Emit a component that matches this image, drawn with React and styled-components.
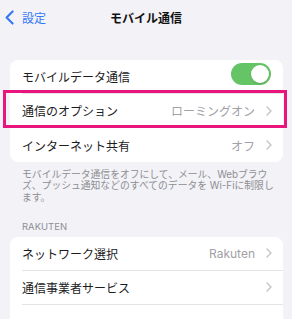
import React from 'react'
import styled, { createGlobalStyle } from 'styled-components'

const GlobalStyle = createGlobalStyle`
    html, body {
        margin: 0;
        padding: 0;
        background: #f2f2f7;
    }
    body {
        font-family: Inter, "Noto Sans CJK JP", "Noto Sans", sans-serif;
        -webkit-font-smoothing: antialiased;
    }
`

function Chevron() {
    return (
        <svg width="6" height="10" viewBox="0 0 6 10">
            <path d="M1 1l4 4-4 4" fill="none" stroke="#c4c4c7" strokeWidth="1.4" strokeLinecap="round" strokeLinejoin="round" />
        </svg>
    )
}

function Row({ label, value, chevron, toggle, last, highlight }) {
    return (
        <RowWrap>
            <RowInner last={last}>
                <Label>{label}</Label>
                {value && <Value>{value}</Value>}
                {chevron && <ChevronBox><Chevron /></ChevronBox>}
                {toggle && <Toggle><Knob /></Toggle>}
            </RowInner>
            {highlight && <Highlight />}
        </RowWrap>
    )
}

export default function App() {
    return (
        <Page>
            <GlobalStyle />
            <Header>
                <Back>
                    <svg width="9" height="15" viewBox="0 0 9 15">
                        <path d="M7.6 1.4L1.6 7.5l6 6.1" fill="none" stroke="#3478f6" strokeWidth="2.1" strokeLinecap="round" strokeLinejoin="round" />
                    </svg>
                    <BackText>設定</BackText>
                </Back>
                <Title>モバイル通信</Title>
                <span />
            </Header>

            <Card>
                <Row label="モバイルデータ通信" toggle />
                <Row label="通信のオプション" value="ローミングオン" chevron highlight />
                <Row label="インターネット共有" value="オフ" chevron last />
            </Card>

            <Footer>
                モバイルデータ通信をオフにして、メール、Webブラウ<br />
                ズ、プッシュ通知などのすべてのデータを Wi-Fiに制限し<br />
                ます。
            </Footer>

            <SectionTitle>RAKUTEN</SectionTitle>

            <Card>
                <Row label="ネットワーク選択" value="Rakuten" chevron />
                <Row label="通信事業者サービス" chevron />
                <Row label="" last />
            </Card>
        </Page>
    )
}

const Page = styled.div`
    width: 292px;
    height: 319px;
    overflow: hidden;
    background: #f2f2f7;
`

const Header = styled.div`
    height: 34px;
    display: grid;
    grid-template-columns: 1fr auto 1fr;
    align-items: center;
    margin-bottom: 26px;
`

const Back = styled.div`
    display: flex;
    align-items: center;
    gap: 8px;
    padding-left: 5px;
    padding-top: 1px;
`

const BackText = styled.span`
    color: #3478f6;
    font-size: 12px;
`

const Title = styled.div`
    font-size: 12px;
    font-weight: 700;
    color: #111;
    padding-top: 1px;
`

const Card = styled.div`
    margin: 0 9px 0 10px;
    background: #fff;
    border-radius: 8px;
`

const RowWrap = styled.div`
    position: relative;
    height: 34px;
    padding-left: 12px;
`

const RowInner = styled.div`
    height: 100%;
    box-sizing: border-box;
    display: flex;
    align-items: center;
    padding-right: 11px;
    border-bottom: ${props => (props.last ? 'none' : '1px solid #e4e4e7')};
`

const Label = styled.span`
    flex: 1;
    font-size: 12px;
    color: #1c1c1e;
`

const Value = styled.span`
    font-size: 12px;
    color: #a1a1a6;
    margin-right: 11px;
`

const ChevronBox = styled.span`
    display: flex;
    align-items: center;
`

const Toggle = styled.span`
    width: 40px;
    height: 22px;
    border-radius: 11px;
    background: #65c466;
    display: flex;
    align-items: center;
    justify-content: flex-end;
    padding-right: 2px;
    box-sizing: border-box;
    margin-right: 1px;
    margin-top: -5px;
`

const Knob = styled.span`
    width: 18px;
    height: 18px;
    border-radius: 50%;
    background: #fff;
    box-shadow: 0 1px 2px rgba(0, 0, 0, 0.15);
`

const Highlight = styled.div`
    position: absolute;
    left: -7px;
    right: -4px;
    top: -4px;
    bottom: 0;
    border: 3.5px solid #e8157f;
    pointer-events: none;
`

const Footer = styled.div`
    padding: 7px 10px 0 22px;
    font-size: 9.8px;
    line-height: 11.3px;
    color: #8e8e93;
    white-space: nowrap;
`

const SectionTitle = styled.div`
    padding: 18px 22px 0;
    margin-bottom: 5px;
    font-size: 9.5px;
    line-height: 11px;
    color: #8e8e93;
`
